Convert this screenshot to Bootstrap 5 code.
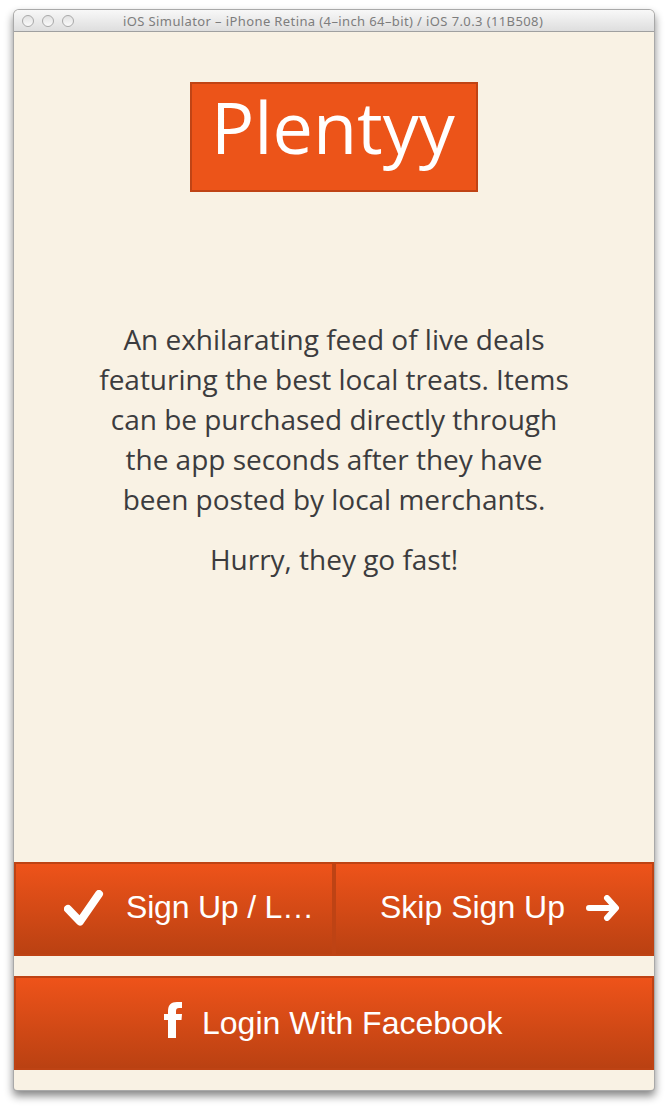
<!DOCTYPE html>
<html lang="en">
<head>
<meta charset="utf-8">
<meta name="viewport" content="width=device-width, initial-scale=1">
<title>Plentyy</title>
<link href="https://cdn.jsdelivr.net/npm/bootstrap@5.3.0/dist/css/bootstrap.min.css" rel="stylesheet">
<style>
body{background:#fff;height:1110px;overflow:hidden;padding:10px 14px 20px}
.sim-window{height:1080px;background:#f9f2e4;border-radius:5px 5px 3px 3px;box-shadow:0 0 0 1px #a9a9a9,0 5px 9px 1px rgba(0,0,0,.48)}
.title-strip{height:22px;background:linear-gradient(#f8f8f8,#dedede);border-bottom:1px solid #a0a0a0;border-radius:5px 5px 0 0;padding-left:8px;font:13px/22px "Lucida Grande","Noto Sans",sans-serif;color:#7d7d7d}
.dot{width:12px;height:12px;border:1px solid #a9a9a9;border-radius:50%;background:linear-gradient(#e2e2e2,#fafafa)}
.dots{gap:8px}
.caption-text{margin-left:49px;letter-spacing:.39px;white-space:nowrap}
.logo{width:288px;height:110px;margin-top:50px;padding-right:2px;background:#ec5419;border:2px solid #c04415;color:#fff;font:400 72px/84px "Open Sans",sans-serif}
.pitch{margin-top:127px;font:400 28px/40px "Open Sans",sans-serif;letter-spacing:-.02px;color:#3c3c3e}
.pitch p{margin-bottom:20px}
.action{height:94px;border:2px solid #be4314;border-radius:0;background:linear-gradient(#ee531a,#ba4112) padding-box;color:#fff;font:400 32px/40px "Liberation Sans",Arial,sans-serif;padding:0 0 2px;white-space:nowrap}
.action:hover{color:#fff}
.actions{gap:20px;margin-bottom:20px}
.action svg{flex:none;fill:none;stroke:#fff;stroke-linecap:round;stroke-linejoin:round}
.sign-up{padding-left:48px}
.sign-up span{margin:-2px 0 0 22px;letter-spacing:-.2px}
.skip-up{padding-right:32px}
.skip-up span{margin:-2px 21px 0 0}
.face-up{padding-left:148px}
.face-up svg{margin-bottom:4px}
.face-up span{margin:1px 0 0 20px}
</style>
</head>
<body>
<main class="sim-window d-flex flex-column">
  <header class="title-strip d-flex align-items-center">
    <div class="dots d-flex"><i class="dot"></i><i class="dot"></i><i class="dot"></i></div>
    <span class="caption-text">iOS Simulator – iPhone Retina (4–inch 64–bit) / iOS 7.0.3 (11B508)</span>
  </header>
  <h1 class="logo mx-auto mb-0 text-center">Plentyy</h1>
  <section class="pitch text-center">
    <p>An exhilarating feed of live deals<br>featuring the best local treats. Items<br>can be purchased directly through<br>the app seconds after they have<br>been posted by local merchants.</p>
    <p>Hurry, they go fast!</p>
  </section>
  <div class="actions d-flex flex-column mt-auto">
    <div class="row g-0">
      <div class="col-6"><button class="action sign-up btn w-100 d-flex align-items-center">
        <svg width="40" height="36" viewBox="0 0 40 36" stroke-width="8"><path d="M4 19L16 31.500L35 4"/></svg>
        <span>Sign Up / L…</span></button></div>
      <div class="col-6"><button class="action skip-up btn w-100 d-flex align-items-center justify-content-end">
        <span>Skip Sign Up</span>
        <svg width="34" height="26" viewBox="0 0 34 26" stroke-width="6"><path d="M3 13H28M21 3L30 13L21 23"/></svg></button></div>
    </div>
    <button class="action face-up btn w-100 d-flex align-items-center">
      <svg width="18" height="36" viewBox="0 0 18 36"><path fill="#fff" stroke="none" d="M4 36V18H0V12H4V9C4 3 7 0 13 0H18V6H15C13 6 12 7 12 9V12H18L17.500 18H12V36Z"/></svg>
      <span>Login With Facebook</span></button>
  </div>
</main>
<script src="https://cdn.jsdelivr.net/npm/bootstrap@5.3.0/dist/js/bootstrap.bundle.min.js"></script>
</body>
</html>
